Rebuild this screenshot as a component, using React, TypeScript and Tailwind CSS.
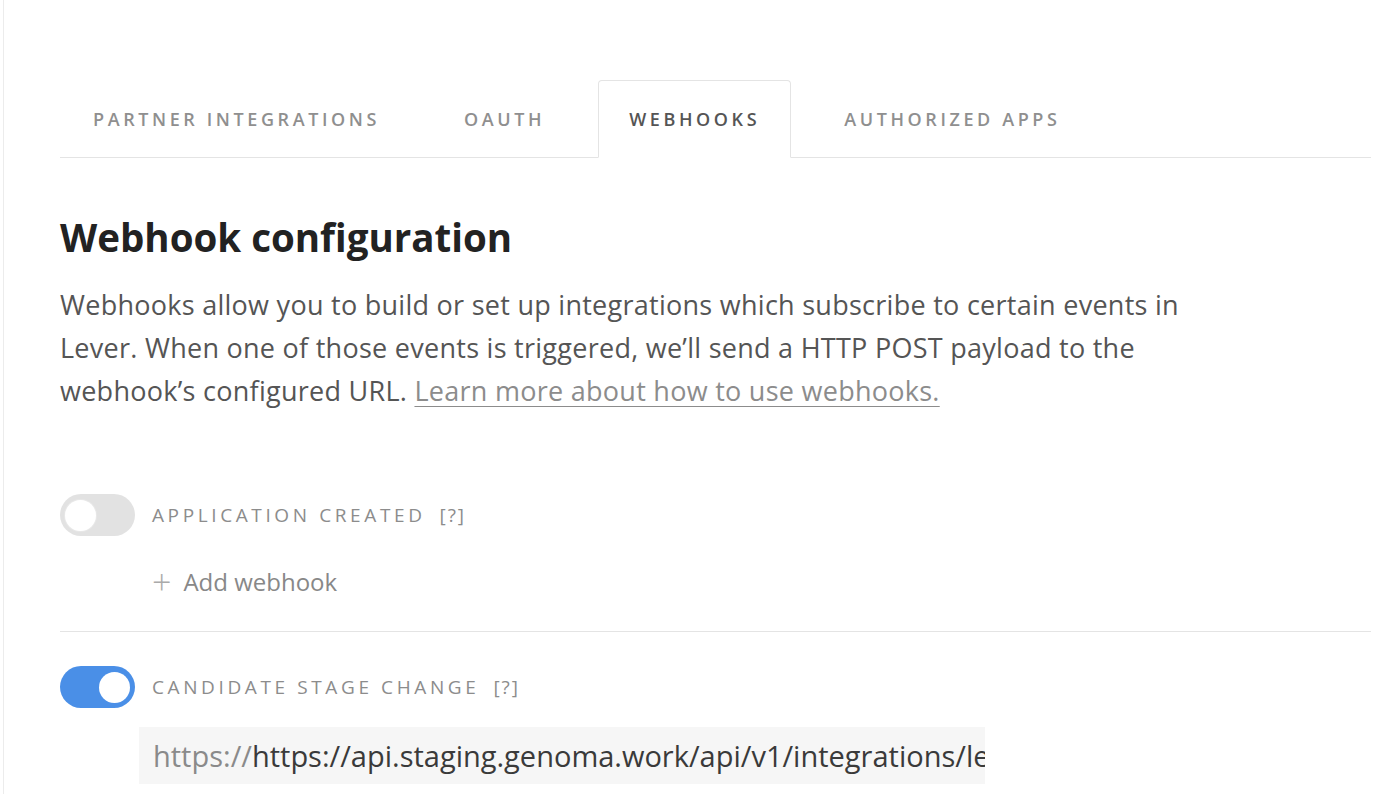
import { useState } from "react";

const tabs = ["Partner Integrations", "OAuth", "Webhooks", "Authorized Apps"];

function Toggle({ on }: { on: boolean }) {
  return (
    <span
      className={`relative inline-flex h-[42px] w-[75px] shrink-0 items-center rounded-full px-[5px] ${
        on ? "justify-end bg-[#4a8fe7]" : "justify-start bg-[#e2e2e2]"
      }`}
    >
      <span
        className={`h-[31px] w-[31px] rounded-full bg-white ${
          on ? "" : "shadow-[0_0_0_1px_#e8e8e8]"
        }`}
      />
    </span>
  );
}

function EventRow({ label, on }: { label: string; on: boolean }) {
  return (
    <div className="flex items-center gap-[17px]">
      <Toggle on={on} />
      <span className="text-[19px] font-medium uppercase tracking-[0.19em] text-[#8c8c8c]">
        {label}
        <span className="ml-[14px] tracking-[0.1em]">[?]</span>
      </span>
    </div>
  );
}

export default function App() {
  const [active] = useState("Webhooks");

  return (
    <div className="min-h-screen bg-white pl-[3px] font-['Open_Sans',sans-serif]">
      <div className="min-h-screen border-l border-[#ececec] pl-[56px] pr-[17px] pt-[80px]">
        {/* Tabs */}
        <nav className="flex gap-[22px] border-b border-[#e4e4e4] pl-[2px]">
          {tabs.map((t) => (
            <div
              key={t}
              className={`-mb-px flex h-[78px] items-center px-[30px] text-[18px] font-semibold uppercase tracking-[0.2em] ${
                t === active
                  ? "rounded-t-[4px] border border-b-white border-[#e4e4e4] text-[#555]"
                  : "border border-transparent text-[#8f8f8f]"
              }`}
            >
              {t}
            </div>
          ))}
        </nav>

        {/* Intro */}
        <h1 className="mt-[56px] text-[38.5px] font-bold leading-[46px] text-[#222]">
          Webhook configuration
        </h1>
        <p className="mt-[23px] text-[27px] leading-[43px] tracking-[0.01em] text-[#555]">
          Webhooks allow you to build or set up integrations which subscribe to certain events in
          <br />
          Lever. When one of those events is triggered, we’ll send a HTTP POST payload to the
          <br />
          webhook’s configured URL.{" "}
          <a className="text-[#8c8c8c] underline decoration-1 underline-offset-[5px]">
            Learn more about how to use webhooks.
          </a>
        </p>

        {/* Application created */}
        <div className="mt-[82px]">
          <EventRow label="Application created" on={false} />
          <div className="mt-[28px] flex items-center gap-[12px] pl-[92px] text-[24px] text-[#888]">
            <span className="text-[34px] font-light leading-none text-[#aaa]">+</span>
            <span>Add webhook</span>
          </div>
        </div>

        <div className="mt-[31px] border-t border-[#e4e4e4]" />

        {/* Candidate stage change */}
        <div className="mt-[34px]">
          <EventRow label="Candidate stage change" on={true} />
          <div className="ml-[79px] mt-[19px] flex h-[57px] w-[846px] items-center bg-[#f6f6f6] pl-[14px] text-[29px]">
            <span className="text-[#8a8a8a]">https://</span>
            <input
              readOnly
              value="https://api.staging.genoma.work/api/v1/integrations/lever"
              className="min-w-0 flex-1 bg-transparent text-[#3a3a3a] outline-none"
            />
          </div>
        </div>
      </div>
    </div>
  );
}
